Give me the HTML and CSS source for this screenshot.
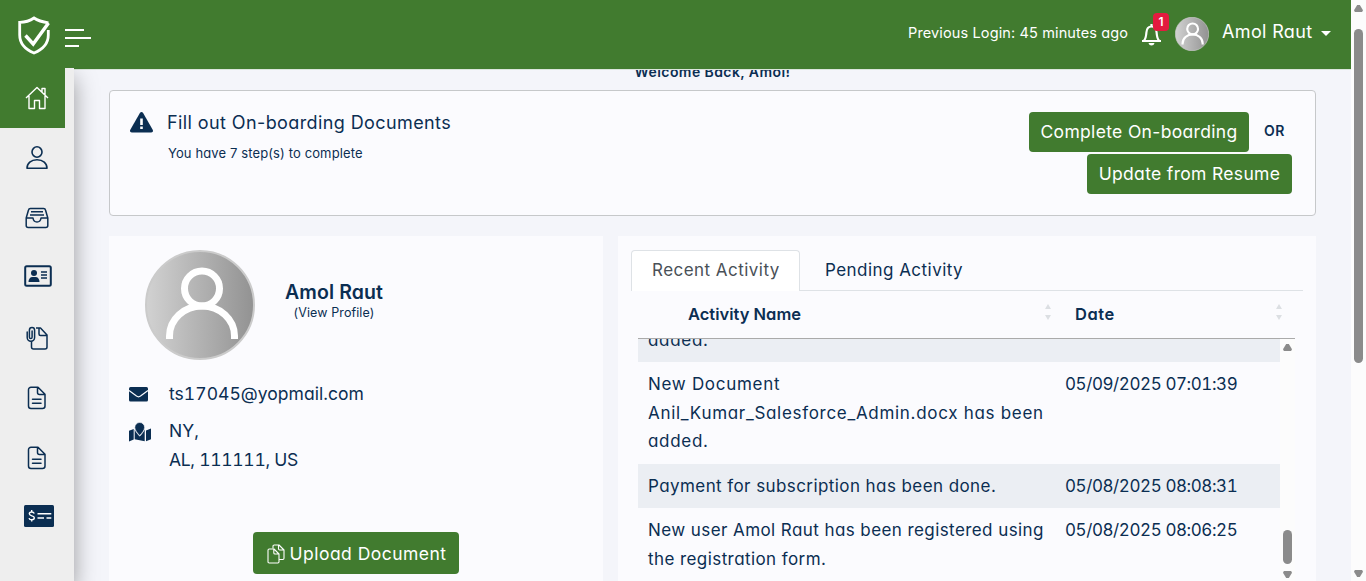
FILE: index.html
```html
<!DOCTYPE html>
<html lang="en">
<head>
<meta charset="utf-8">
<title>Dashboard</title>
<link rel="stylesheet" href="styles.css">
</head>
<body>
<svg width="0" height="0" class="defs">
  <defs>
    <linearGradient id="silver"><stop offset="0" stop-color="#d2d2d2"/><stop offset="1" stop-color="#929292"/></linearGradient>
    <symbol id="avatar" viewBox="0 0 110 110"><circle cx="55" cy="55" r="54" fill="url(#silver)" stroke="#cbcbcb" stroke-width="2"/><g fill="none" stroke="#fff" stroke-width="7"><circle cx="57" cy="38.500" r="17.500"/><path d="M24.500 89v-3a32.500 30 0 0 1 65 0v3"/></g></symbol>
    <symbol id="doc" viewBox="0 0 20 24"><g fill="none" stroke="#0b2e52" stroke-width="1.500" stroke-linejoin="round" stroke-linecap="round"><path d="M4 1.200h7l7 7V20a2.500 2.500 0 0 1-2.500 2.500H4A2.500 2.500 0 0 1 1.500 20V3.700A2.500 2.500 0 0 1 4 1.200zM10.500 1.500v5a2 2 0 0 0 2 2h5.300M5.500 13.200h8.500M5.500 17.200h8.500"/></g></symbol>
  </defs>
</svg>
<div class="window">
  <div class="page">
    <header class="topbar">
      <svg class="logo" width="34" height="40" viewBox="0 0 34 40"><g fill="none" stroke="#fff" stroke-width="2.800"><path d="M31.500 6.800C25 6 20.500 4.500 17 2 13 4.800 8 6.300 2.700 6.300V19c0 9.500 5.800 14.500 14.300 18 8.500-3.500 14.300-8.500 14.300-18v-5"/><path d="M8.500 19.500l7.700 8.500L31.500 7" stroke-width="3.400"/></g></svg>
      <div class="burger"><i></i><i></i><i></i></div>
      <div class="user">
        <span class="login">Previous Login: 45 minutes ago</span>
        <div class="bell">
          <svg width="22" height="24" viewBox="0 0 22 24"><path d="M1 18h19M3 17.500c2-2 2.200-5 2.400-8C5.700 5.500 7.500 3.500 10.500 3.500s4.800 2 5.100 6c.2 3 .4 6 2.400 8M10.500 1v3" fill="none" stroke="#fff" stroke-width="2.200"/><path d="M7.500 20h6c-.4 1.700-1.600 2.500-3 2.500s-2.600-.8-3-2.500z" fill="#fff"/></svg>
          <b class="badge">1</b>
        </div>
        <svg class="face" width="34" height="34"><use href="#avatar"/></svg>
        <span class="name">Amol Raut</span>
        <i class="caret"></i>
      </div>
    </header>
    <div class="body">
      <nav class="side">
        <a class="on"><svg width="24" height="24" viewBox="0 0 24 24" fill="none" stroke="#fff" stroke-width="1.400" stroke-linejoin="round"><path d="M1 12L12 1.500 23 12M4 10v12.500h5.500v-8h5v8H20V10M17 6V2.500h3V9"/></svg></a>
        <a><svg width="24" height="24" viewBox="0 0 24 24" fill="none" stroke="#0b2e52" stroke-width="1.600"><ellipse cx="12" cy="6" rx="5" ry="5.200"/><path d="M2 22.200c0-5 4-8.500 10-8.500s10 3.500 10 8.500z" stroke-linejoin="round"/></svg></a>
        <a><svg width="24" height="22" viewBox="0 0 24 22" fill="none" stroke="#0b2e52" stroke-width="1.500" stroke-linejoin="round"><path d="M1.200 11L3.500 3a2 2 0 0 1 2-1.600h13a2 2 0 0 1 2 1.600l2.300 8v7.500a2 2 0 0 1-2 2H3.200a2 2 0 0 1-2-2zM1.200 11H8c.3 2.500 1.700 4 4 4s3.700-1.500 4-4h6.800M6 4.700h12M5 7.900h14"/></svg></a>
        <a class="wide up"><svg width="28" height="22" viewBox="0 0 28 22"><rect x="1.200" y="1.200" width="25.600" height="19.600" rx="1.500" fill="none" stroke="#0b2e52" stroke-width="2"/><circle cx="10" cy="8" r="3" fill="#0b2e52"/><path d="M4.500 17c0-3 1.500-5 4-5h3c2.500 0 4 2 4 5z" fill="#0b2e52"/><path d="M17 7h6M17 10h6M17 13h6" stroke="#0b2e52" stroke-width="1.500"/></svg></a>
        <a><svg width="22" height="24" viewBox="0 0 22 24" fill="none" stroke="#0b2e52" stroke-width="1.500" stroke-linejoin="round"><path d="M10 2h4.500L21 9v12a2 2 0 0 1-2 2H7.500a2 2 0 0 1-2-2v-5.500M13 2.500V8a1.500 1.500 0 0 0 1.500 1.500H21"/><path d="M1.200 6v5.500a3.700 3.700 0 0 0 7.400 0V4.200a2.600 2.600 0 0 0-5.200 0v7a1.300 1.300 0 0 0 2.700 0V5" stroke-linecap="round"/></svg></a>
        <a><svg width="20" height="24"><use href="#doc"/></svg></a>
        <a><svg width="20" height="24"><use href="#doc"/></svg></a>
        <a class="check up"><svg width="30" height="22" viewBox="0 0 30 22"><rect width="30" height="22" rx="1.500" fill="#0b2e52"/><path d="M10.300 8.500C9.800 7.400 8.800 7 7.600 7 6.200 7 5.300 7.700 5.300 8.800c0 2.600 5 1.400 5 4 0 1.200-1 2-2.500 2-1.300 0-2.400-.5-2.800-1.700M7.700 5v2M7.700 14.800v1.800" fill="none" stroke="#fff" stroke-width="1.400"/><path d="M13.500 8.800h13.800M13.500 13h6.500M22.500 13h4.800" stroke="#fff" stroke-width="1.400"/></svg></a>
      </nav>
      <main>
        <h4 class="welcome"><span>Welcome Back, Amol!</span></h4>
        <section class="card onboard">
          <svg class="warn" width="23" height="21" viewBox="0 0 23 21"><path d="M9.900 1c.8-1.300 2.400-1.300 3.200 0l9.600 16.800c.7 1.300 0 2.700-1.500 2.700H1.800C.3 20.500-.4 19.100.3 17.800z" fill="#0b2e52"/><path d="M10.200 6.500h2.600v6.500h-2.600zM10.200 14.500h2.600V17h-2.600z" fill="#fff"/></svg>
          <div class="msg"><div class="fill">Fill out On-boarding Documents</div><div class="steps">You have 7 step(s) to complete</div></div>
          <div class="actions">
            <div class="line"><button class="b1"><span>Complete On-boarding</span></button><b class="or">OR</b></div>
            <button class="b2"><span>Update from Resume</span></button>
          </div>
        </section>
        <div class="cols">
          <section class="profile">
            <div class="who">
              <svg width="110" height="110"><use href="#avatar"/></svg>
              <div class="id"><b>Amol Raut</b><small>(View Profile)</small></div>
            </div>
            <div class="info mail"><svg width="19" height="15" viewBox="0 0 19 15"><rect width="19" height="14.500" rx="1.500" fill="#0b2e52"/><path d="M0 3.500l7.500 5.600c1.300.9 2.700.9 4 0L19 3.500" fill="none" stroke="#fbfbfe" stroke-width="1.200"/></svg><span>ts17045@yopmail.com</span></div>
            <div class="info addr"><svg width="22" height="20" viewBox="0 0 22 20" fill="#0b2e52"><path d="M0 8.700L4.700 7v10.500L0 19.500zM5.700 7.500c1 2.500 3 5.200 5 7 2-1.800 4-4.500 5-7v11.700l-10-2zM17 8.500l5-2v10.800l-5 2z"/><path d="M10.700.5a4.900 4.900 0 0 1 4.900 4.900c0 2.700-3.100 6.300-4.900 8-1.800-1.700-4.900-5.300-4.900-8A4.900 4.900 0 0 1 10.700.5z" stroke="#fbfbfe" stroke-width=".6"/></svg><span><span class="ny">NY,</span><br><span class="al">AL, 111111, US</span></span></div>
            <button class="upload"><svg width="18" height="20" viewBox="0 0 18 20" fill="none" stroke="#fff" stroke-width="1.100" stroke-linejoin="round"><path d="M6 4.500V2.200C6 1.500 6.500 1 7.200 1H12l5 5v8.300c0 .7-.5 1.200-1.200 1.200H12M11.500 1v3.800c0 .7.500 1.200 1.200 1.200H17"/><path d="M2.200 5H7l5 5v7.800c0 .7-.5 1.200-1.200 1.200H2.200C1.500 19 1 18.500 1 17.800V6.200C1 5.500 1.500 5 2.200 5zM6.800 5v4c0 .6.500 1 1.200 1h4"/></svg><span>Upload Document</span></button>
          </section>
          <section class="activity">
            <div class="tabs"><div class="tab active">Recent Activity</div><div class="tab">Pending Activity</div></div>
            <div class="thead"><b class="h1">Activity Name</b><span class="sort"><i></i><i></i></span><b class="h2">Date</b><span class="sort"><i></i><i></i></span></div>
            <div class="scroller">
              <div class="rows">
                <div class="row odd first"><p class="loose">added.</p></div>
                <div class="row"><p class="loose">New Document<br>Anil_Kumar_Salesforce_Admin.docx has been<br>added.</p><time>05/09/2025 07:01:39</time></div>
                <div class="row odd"><p>Payment for subscription has been done.</p><time>05/08/2025 08:08:31</time></div>
                <div class="row"><p>New user Amol Raut has been registered using<br>the registration form.</p><time>05/08/2025 08:06:25</time></div>
              </div>
              <div class="bar inner"><i class="up-arrow"></i><i class="thumb"></i><i class="down-arrow"></i></div>
            </div>
          </section>
        </div>
      </main>
    </div>
  </div>
  <div class="bar outer"><i class="up-arrow"></i><i class="thumb"></i><i class="down-arrow"></i></div>
</div>
</body>
</html>
```
FILE: styles.css
```css
* { box-sizing: border-box; }
body { margin: 0; color: #0b2e52; background: #f4f5fa; font: 17px/28.8px Inter, "Open Sans", sans-serif; font-feature-settings: "cv11"; white-space: nowrap; overflow: hidden; }
svg { display: block; flex: none; }
.defs { position: absolute; }
p, h4 { margin: 0; }
button { font: inherit; font-feature-settings: inherit; color: #fff; background: #417b2f; border: 0; border-radius: 4px; padding: 0; display: flex; align-items: center; justify-content: center; }
.window { display: flex; height: 581px; overflow: hidden; }
.page { width: 1351px; display: flex; flex-direction: column; }
.topbar { height: 69px; flex: none; background: #417b2f; display: flex; align-items: flex-start; color: #fff; padding-left: 17px; }
.logo { margin-top: 16px; }
.burger { margin: 29px 0 0 14px; display: grid; gap: 6px; }
.burger i { height: 2px; width: 19px; background: #fff; }
.burger i:nth-child(2) { width: 26px; }
.burger i:nth-child(3) { width: 14px; }
.user { margin-left: auto; display: flex; height: 69px; padding-right: 20px; }
.login { font-size: 14.5px; letter-spacing: .13px; margin-top: 19px; width: 220px; }
.bell { position: relative; margin: 23px 0 0 13px; width: 22px; }
.badge { position: absolute; left: 12px; top: -10px; width: 16px; height: 18px; border-radius: 4px; background: #e31b3f; font-size: 12px; line-height: 17px; text-align: center; font-weight: 600; }
.face { margin: 17px 0 0 12px; }
.name { font-size: 18px; letter-spacing: .35px; width: 90px; margin: 18px 0 0 13px; }
.caret { margin: 31px 0 0 9px; width: 0; height: 0; border: 5px solid transparent; border-top-color: #fff; border-bottom: 0; }
.body { flex: 1; min-height: 0; display: flex; }
.side { width: 74px; flex: none; background: #eee; box-shadow: 0 10px 22px rgba(0,0,0,.38); margin-top: -1px; clip-path: inset(0 -40px 0 0); display: flex; flex-direction: column; }
.side a { height: 60px; width: 65px; display: flex; align-items: center; justify-content: center; padding-left: 8px; flex: none; }
.side .on { background: #417b2f; }
.side .up { padding-bottom: 4px; }
.side .wide { padding-left: 10px; }
.side .check { padding-left: 13px; }
main { flex: 1; min-width: 0; padding: 0 35px; overflow: hidden; border-top: 1px solid #dbe6dc; display: flex; flex-direction: column; }
.welcome { font-size: 14px; letter-spacing: .42px; font-weight: 600; text-align: center; line-height: 20px; height: 20px; margin-top: -8px; flex: none; }
.card { background: #fbfbfe; border: 1px solid #c6c8ca; border-radius: 4px; height: 126px; margin-top: 8px; flex: none; display: flex; padding: 21px 23px 0 20px; }
.msg { margin-left: 14px; }
.fill { font-size: 18px; letter-spacing: .4px; line-height: 22px; }
.steps { font-size: 13px; letter-spacing: .12px; line-height: 20px; margin: 9px 0 0 1px; }
.actions { margin-left: auto; }
.line { display: flex; height: 40px; }
.b1 { width: 220px; height: 40px; }
.or { font-size: 14px; letter-spacing: .4px; font-weight: 600; line-height: 37px; margin-left: 15px; width: 28px; }
.b2 { width: 205px; height: 40px; margin: 2px 0 0 58px; }
.b1, .b2, .upload { font-size: 17.5px; letter-spacing: .33px; }
.cols { display: flex; gap: 15px; margin-top: 20px; flex: 1; }
.profile { width: 494px; background: #fbfbfe; padding: 14px 20px 0; }
.who { display: flex; padding-left: 16px; height: 110px; }
.id { margin: 30px 0 0 30px; width: 98px; text-align: center; }
.id b { display: block; font-size: 19.5px; letter-spacing: .1px; font-weight: 600; line-height: 24px; }
.id small { display: block; font-size: 12.5px; letter-spacing: .1px; line-height: 18px; }
.info { display: flex; font-size: 17.5px; font-feature-settings: "cv11", "tnum"; letter-spacing: .04px; }
.mail { margin-top: 20px; }
.mail svg { margin-top: 7px; margin-right: 21px; }
.addr { margin-top: 8px; }
.addr svg { margin: 5px 18px 0 0; }
.al { letter-spacing: -.3px; }
.upload { width: 206px; height: 42px; margin: 58px 0 0 124px; gap: 5px; letter-spacing: .46px; padding: 2px 0 0 1px; }
.activity { width: 698px; background: #fbfbfe; padding: 14px 13px 0; display: flex; flex-direction: column; }
.tabs { display: flex; height: 41px; border-bottom: 1px solid #dee2e6; flex: none; letter-spacing: .46px; }
.tab { height: 41px; line-height: 40px; padding: 0 25px; }
.active { width: 169px; line-height: 38px; background: #fff; border: 1px solid #dee2e6; border-bottom: 0; border-radius: 4px 4px 0 0; padding: 0 20px; color: #495057; }
.thead { display: flex; height: 48px; width: 657px; margin-left: 7px; border-bottom: 1px solid #aaa; line-height: 46px; flex: none; }
.thead b { font-weight: 600; font-size: 16.5px; }
.h1 { width: 356px; margin-left: 50px; }
.h2 { width: 200px; margin-left: 23px; letter-spacing: .5px; }
.sort { width: 8px; padding-top: 13px; display: grid; align-content: start; justify-content: center; gap: 6px; }
.sort i { border: 3px solid transparent; border-top: 0; border-bottom: 5px solid #dcdfe3; }
.sort i + i { border-bottom: 0; border-top: 5px solid #dcdfe3; }
.scroller { display: flex; flex: none; height: 242px; margin-left: 7px; }
.rows { width: 642px; overflow: hidden; }
.row { display: flex; padding: 7.8px 10px 7.7px; letter-spacing: .42px; }
.odd { background: #ebeef3; }
.first { height: 44px; margin-top: -21px; }
.row p { width: 417px; }
.row .loose { letter-spacing: .7px; }
.row time { font-feature-settings: "cv11", "tnum"; letter-spacing: -.42px; }
.bar { width: 15px; background: #fcfcfc; display: flex; flex-direction: column; align-items: center; flex: none; }
.bar i { width: 9px; flex: none; }
.up-arrow, .down-arrow { height: 7px; background: #8b8b8b; clip-path: polygon(35% 0, 65% 0, 100% 75%, 90% 100%, 10% 100%, 0 75%); }
.down-arrow { transform: scaleY(-1); }
.thumb { background: #8b8b8b; border-radius: 5px; }
.outer { padding-top: 5px; }
.outer .thumb { height: 334px; margin-top: 17px; }
.outer .down-arrow { margin-top: 207px; }
.inner { padding-top: 5px; }
.inner .thumb { height: 34px; margin-top: 179px; }
.inner .down-arrow { margin-top: 7px; }
```
